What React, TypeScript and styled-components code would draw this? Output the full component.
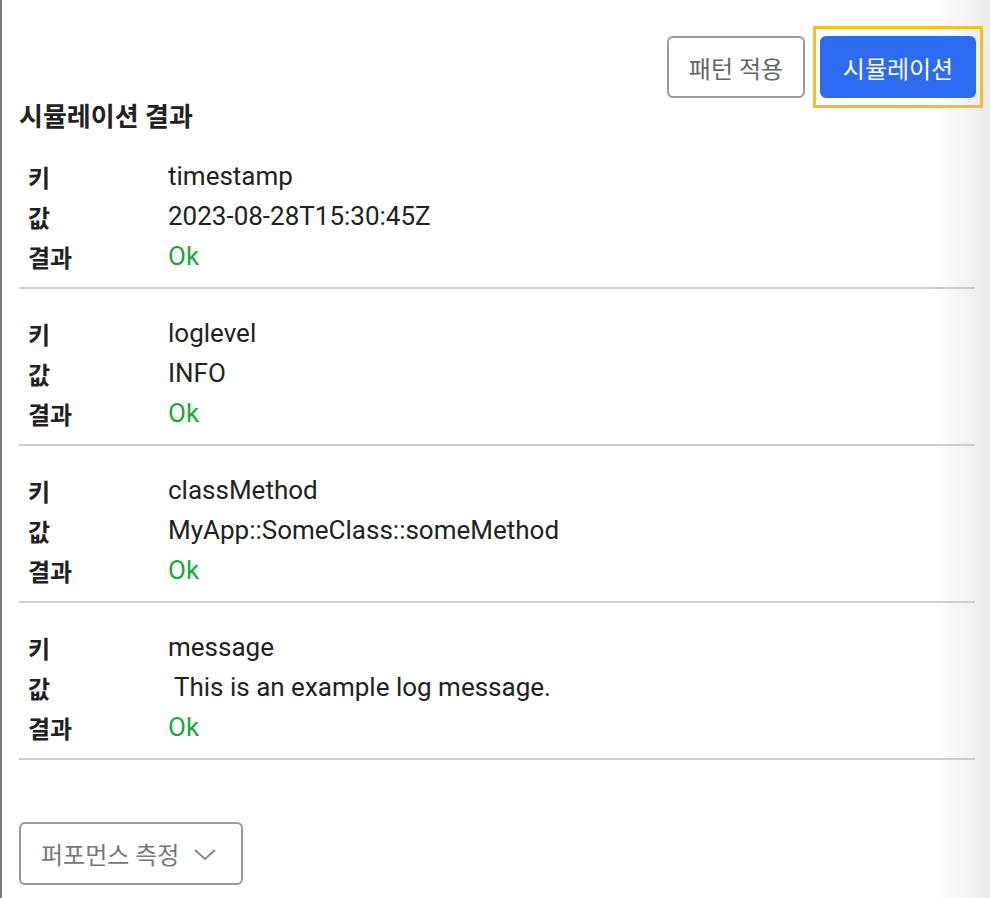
import React from "react"
import styled, { createGlobalStyle } from "styled-components"

const GlobalStyle = createGlobalStyle`
  html, body {
    margin: 0;
    padding: 0;
    background: #fff;
  }
  body {
    font-family: Roboto, "Noto Sans CJK KR", "Noto Sans", sans-serif;
    color: #222;
  }
`

const Page = styled.div`
  min-height: 898px;
  box-sizing: border-box;
  border-left: 2px solid #7a7a7a;
  padding: 36px 15px 0 17px;
  background: linear-gradient(to right, #fff calc(100% - 56px), #ebebeb 100%);
`

const Toolbar = styled.div`
  display: flex;
  justify-content: flex-end;
  align-items: center;
  gap: 8px;
  height: 62px;
`

const FocusRing = styled.span`
  display: inline-flex;
  padding: 7px 4px;
  border: 3px solid #f7bd2c;
  margin-right: -8px;
`

const Button = styled.button<{ $primary?: boolean }>`
  height: 62px;
  box-sizing: border-box;
  padding: 0;
  border-radius: 6px;
  font-family: inherit;
  font-size: 24px;
  cursor: pointer;
  border: 2px solid ${(p) => (p.$primary ? "#2d6cf0" : "#9a9a9a")};
  background: ${(p) => (p.$primary ? "#2d6cf0" : "#fff")};
  color: ${(p) => (p.$primary ? "#fff" : "#666")};
  width: ${(p) => (p.$primary ? "156px" : "138px")};
`

const Title = styled.h2`
  margin: 4px 0 0;
  font-size: 26px;
  line-height: 30px;
  font-weight: 700;
  color: #222;
`

const Section = styled.div`
  padding: 24px 0 11px 9px;
  border-bottom: 2px solid #cfcfcf;
`

const Row = styled.div`
  display: grid;
  grid-template-columns: 140px 1fr;
  height: 40px;
  align-items: center;
`

const Label = styled.div`
  font-size: 24px;
  font-weight: 700;
  color: #222;
`

const Value = styled.div<{ $ok?: boolean }>`
  font-size: 26px;
  white-space: pre;
  color: ${(p) => (p.$ok ? "#17a83a" : "#222")};
`

const DropButton = styled.button`
  margin-top: 62px;
  display: flex;
  align-items: center;
  gap: 14px;
  height: 63px;
  box-sizing: border-box;
  padding: 0 24px 0 20px;
  border: 2px solid #9a9a9a;
  border-radius: 6px;
  background: #fff;
  font-family: inherit;
  font-size: 24px;
  color: #777;
`

const rows = [
  { key: "timestamp", value: "2023-08-28T15:30:45Z" },
  { key: "loglevel", value: "INFO" },
  { key: "classMethod", value: "MyApp::SomeClass::someMethod" },
  { key: "message", value: " This is an example log message." },
]

export default function App() {
  return (
    <>
      <GlobalStyle />
      <Page>
        <Toolbar>
          <Button>패턴 적용</Button>
          <FocusRing>
            <Button $primary>시뮬레이션</Button>
          </FocusRing>
        </Toolbar>
        <Title>시뮬레이션 결과</Title>
        {rows.map((r) => (
          <Section key={r.key}>
            <Row>
              <Label>키</Label>
              <Value>{r.key}</Value>
            </Row>
            <Row>
              <Label>값</Label>
              <Value>{r.value}</Value>
            </Row>
            <Row>
              <Label>결과</Label>
              <Value $ok>Ok</Value>
            </Row>
          </Section>
        ))}
        <DropButton>
          퍼포먼스 측정
          <svg width="24" height="16" viewBox="0 0 24 16" fill="none">
            <polyline points="2,4 12,13 22,4" stroke="#8a8a8a" strokeWidth="2" />
          </svg>
        </DropButton>
      </Page>
    </>
  )
}
